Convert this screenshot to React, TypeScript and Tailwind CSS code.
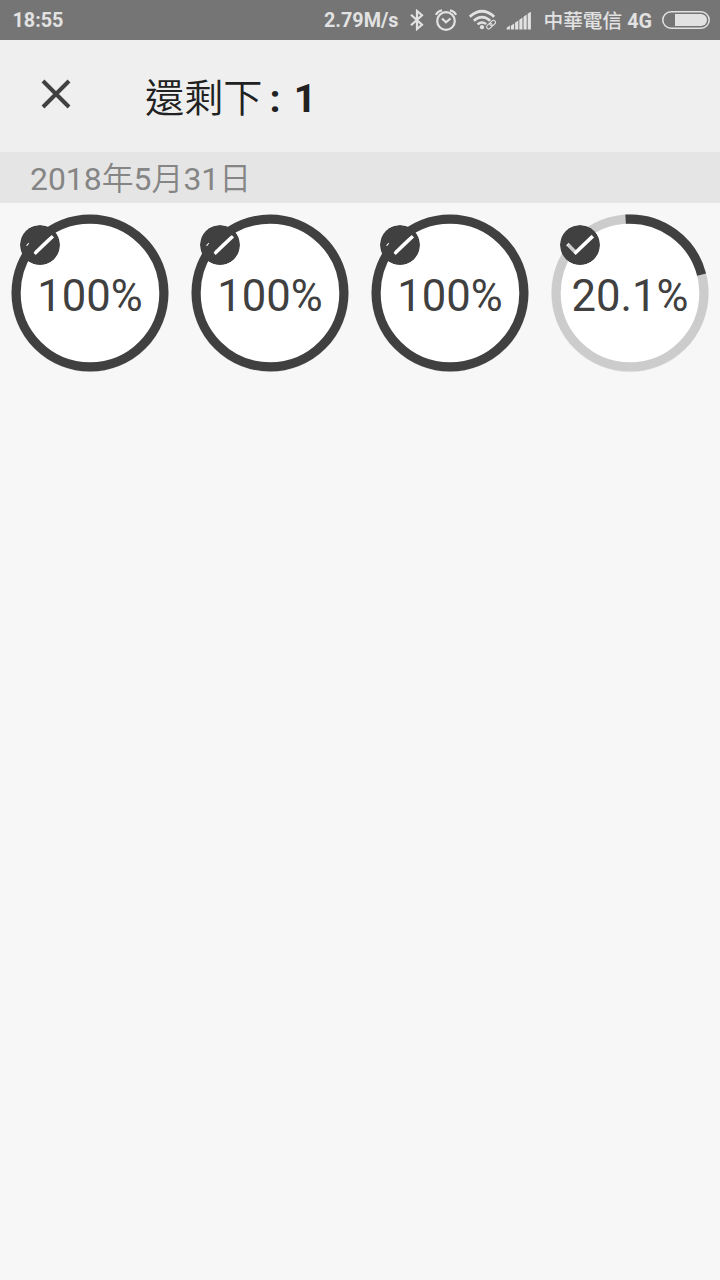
type Item = {
  label: string;
  full: boolean;
};

const items: Item[] = [
  { label: "100%", full: true },
  { label: "100%", full: true },
  { label: "100%", full: true },
  { label: "20.1%", full: false },
];

const bars = [
  { x: 1, h: 3 },
  { x: 5.2, h: 5 },
  { x: 9.4, h: 8 },
  { x: 13.6, h: 11 },
  { x: 17.8, h: 14 },
  { x: 22, h: 17 },
];

function StatusBar() {
  return (
    <div className="flex h-10 items-center bg-[#757575] pl-[12.5px] pr-2.5 text-[19.8px] font-bold leading-none text-[#e2e2e2]">
      <span className="pt-0.5">18:55</span>
      <span className="ml-auto pt-0.5">2.79M/s</span>

      {/* Bluetooth */}
      <svg className="ml-[11px] shrink-0" width="14" height="22" viewBox="0 0 14 22" fill="none" stroke="currentColor" strokeWidth="2.2">
        <path d="M1 5.7 12 15.8 7 20V2l5 4.2L1 16.3" />
      </svg>

      {/* Alarm */}
      <svg className="ml-[11px] shrink-0" width="22" height="22" viewBox="0 0 22 22" fill="none" stroke="currentColor" strokeWidth="2.2">
        <circle cx="11" cy="12" r="8.8" />
        <path d="m7 9.5 4 3.8 4.5-3.8M.9 5.8Q2.5 2.3 7 1.3M21.1 5.8Q19.5 2.3 15 1.3" />
      </svg>

      {/* Wifi with link */}
      <svg className="ml-3 shrink-0" width="28" height="22" viewBox="0 0 28 22" fill="none" stroke="currentColor">
        <path d="M.8 7.7Q13-3.3 25.2 7.7" strokeWidth="2.8" />
        <path d="M4.8 11.8Q13 4.4 21.2 11.8" strokeWidth="2.6" />
        <path d="M8.5 15.4Q13 11.5 17.2 15.2" strokeWidth="2.4" />
        <circle cx="13" cy="18.2" r="2.1" fill="currentColor" stroke="none" />
        <g transform="rotate(-43 22 15.6)" strokeWidth="1.1">
          <rect x="16.7" y="13.6" width="6.2" height="4" rx="2" />
          <rect x="21.1" y="13.6" width="6.2" height="4" rx="2" />
        </g>
      </svg>

      {/* Signal */}
      <svg className="ml-[9px] mt-px shrink-0" width="26" height="18" viewBox="0 0 26 18" fill="currentColor">
        {bars.map((b) => (
          <path key={b.x} d={`M${b.x - 0.3} 17.5v-${b.h - 1.2}l3.2-2.1v${b.h + 0.9}z`} />
        ))}
      </svg>

      <span className="ml-3 flex items-baseline whitespace-pre pt-[3px]">
        <span className="text-[19.7px] font-medium">中華電信</span>
        <span> 4G</span>
      </span>

      {/* Battery */}
      <svg className="ml-2.5 shrink-0" width="48" height="18" viewBox="0 0 48 18" fill="none">
        <rect x=".8" y=".8" width="46.4" height="16.4" rx="8.2" stroke="currentColor" strokeWidth="1.5" />
        <path d="M13 3h26a6 6 0 0 1 0 12H13z" fill="currentColor" />
      </svg>
    </div>
  );
}

function ProgressCircle({ item, id }: { item: Item; id: string }) {
  return (
    <div className="relative flex h-[180px] w-[180px] items-center justify-center">
      <svg className="absolute inset-0" width="180" height="180" viewBox="0 0 180 180" fill="none">
        <defs>
          <mask id={id}>
            <circle cx="40" cy="42" r="20" fill="white" />
            <path d="m27.4 41 8.3 8.5L52.8 33.1" stroke="black" strokeWidth="3.6" />
          </mask>
        </defs>
        <circle cx="90" cy="90.4" r="78.8" fill="#ececec" />
        <circle cx="90" cy="90" r="72" fill="white" />
        <circle cx="90" cy="90" r="73.9" stroke={item.full ? "#404040" : "#cccccc"} strokeWidth="9.2" />
        {!item.full && (
          <path d="M85.6 16.2A73.9 73.9 0 0 1 161.6 71.6" stroke="#404040" strokeWidth="9.2" />
        )}
        <circle cx="40" cy="42" r="20" fill="#404040" mask={`url(#${id})`} />
      </svg>
      <span className="relative pt-2 text-[43.6px] leading-none text-[#404040]">{item.label}</span>
    </div>
  );
}

export default function App() {
  return (
    <div className="min-h-screen w-[720px] bg-[#f7f7f7] font-[Roboto,'Noto_Sans_CJK_TC',sans-serif]">
      <StatusBar />

      {/* Header */}
      <header className="flex h-28 items-center bg-[#efefef] pl-[41px]">
        <svg className="mb-1 shrink-0" width="30" height="30" viewBox="0 0 30 30" fill="none" stroke="#404040" strokeWidth="4">
          <path d="m2 2 26 26M28 2 2 28" />
        </svg>
        <h1 className="ml-[74px] flex items-baseline pt-1.5 text-[39.5px] leading-none text-[#212121]">
          <span className="text-[39.2px] font-[350]">還剩下</span>
          <span className="ml-[7px] font-bold">:</span>
          <span className="ml-[13px] font-bold">1</span>
        </h1>
      </header>

      {/* Date */}
      <div className="flex h-[51px] items-center bg-[#e5e5e5] pl-[30px] pt-1 text-[31.9px] leading-none text-[#858585]">
        <span>
          2018<span className="font-[350]">年</span>5<span className="font-[350]">月</span>31<span className="font-[350]">日</span>
        </span>
      </div>

      <div className="grid grid-cols-4">
        {items.map((item, i) => (
          <ProgressCircle key={i} item={item} id={`check-${i}`} />
        ))}
      </div>
    </div>
  );
}
